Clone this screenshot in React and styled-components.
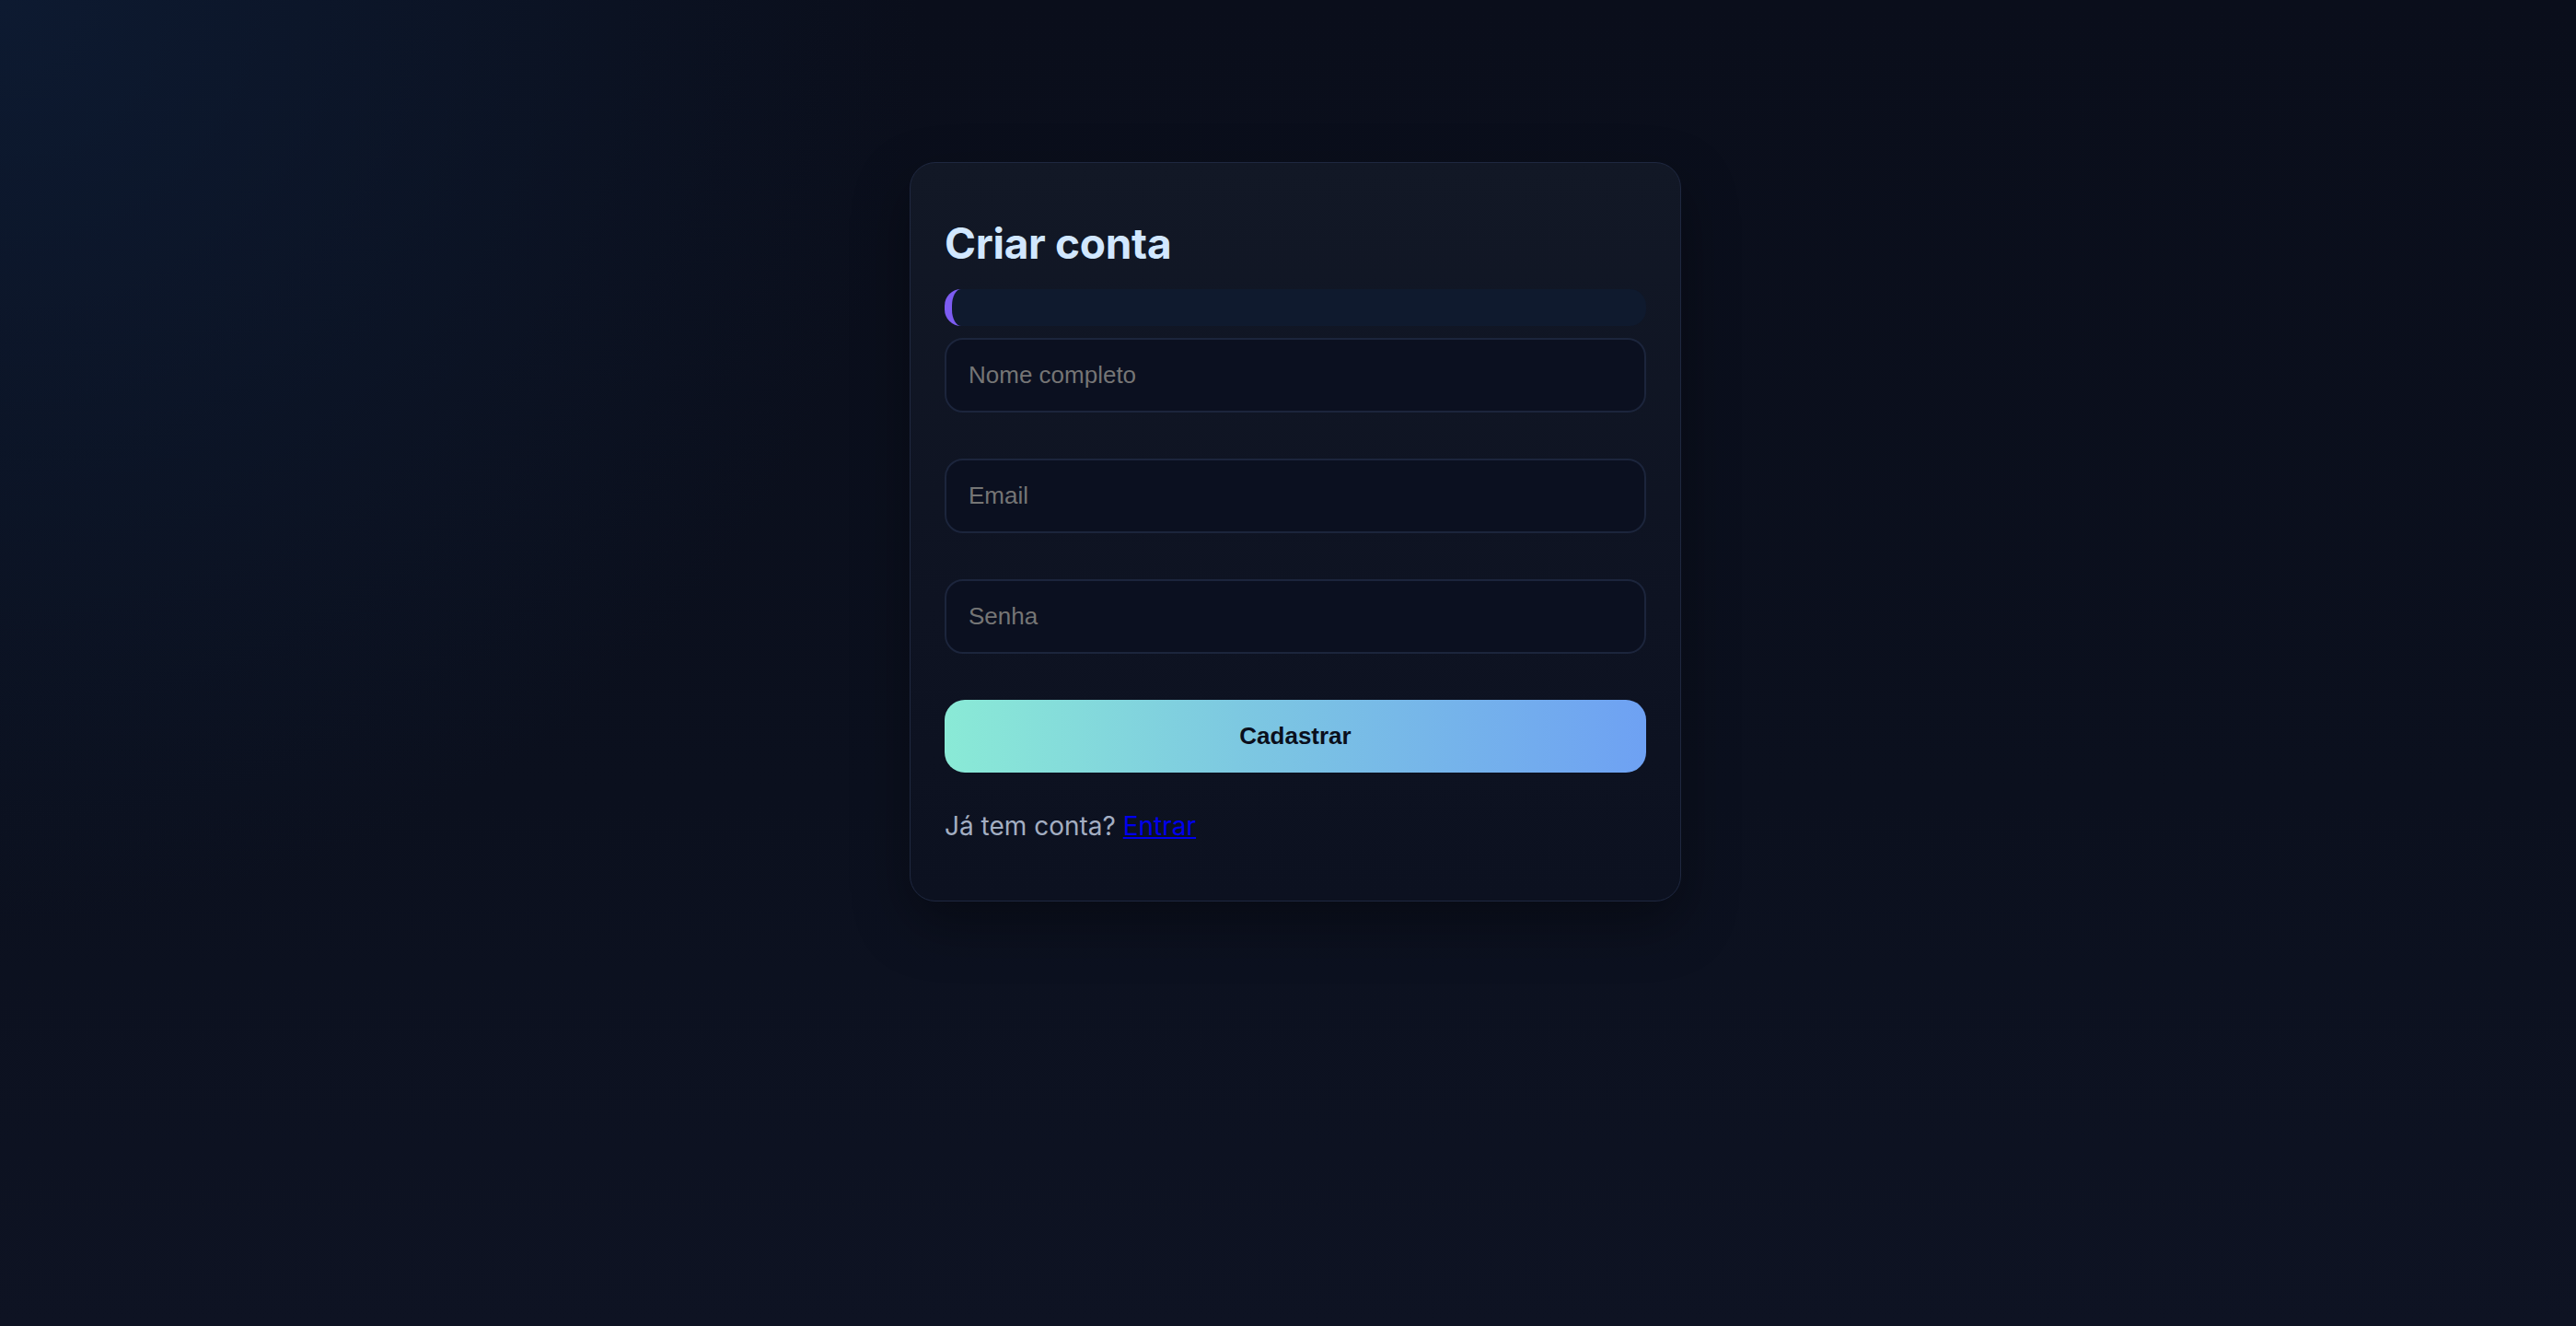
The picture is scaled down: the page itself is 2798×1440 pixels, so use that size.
import React from "react";
import styled, { createGlobalStyle } from "styled-components";

const GlobalStyle = createGlobalStyle`
  html, body {
    margin: 0;
    padding: 0;
  }
  body {
    min-height: 100vh;
    font-family: Inter, "Noto Sans", sans-serif;
    background:
      radial-gradient(circle 1000px at 0% 0%, rgba(14, 30, 56, 0.75) 0%, rgba(11, 16, 32, 0) 100%),
      linear-gradient(180deg, #0a0e1b 0%, #0b101e 60%, #0e1323 100%);
    background-attachment: fixed;
  }
  #root {
    min-height: 100vh;
  }
`;

const Page = styled.div`
  display: flex;
  justify-content: center;
  align-items: flex-start;
  padding: 176px 0 0 16px;
  box-sizing: border-box;
  min-height: 100vh;
`;

const Card = styled.div`
  width: 838px;
  box-sizing: border-box;
  padding: 37px;
  border: 1px solid #1f2840;
  border-radius: 28px;
  background: linear-gradient(180deg, #121826 0%, #0e1322 60%, #0c1120 100%);
  box-shadow: 0 24px 60px rgba(0, 0, 0, 0.35);
`;

const Title = styled.h1`
  margin: 22px 0 22px;
  font-family: Inter, "Noto Sans", sans-serif;
  font-size: 46px;
  font-weight: 700;
  line-height: 56px;
  letter-spacing: -0.3px;
  color: #d1e7ff;
`;

const Progress = styled.div`
  height: 40px;
  box-sizing: border-box;
  margin-bottom: 13px;
  border-radius: 18px;
  border-left: 8px solid #7d5cf2;
  background: #0f1a2e;
`;

const Form = styled.form`
  display: flex;
  flex-direction: column;
  gap: 50px;
`;

const Input = styled.input`
  height: 81px;
  box-sizing: border-box;
  padding: 0 24px;
  border: 2px solid #1c253c;
  border-radius: 20px;
  background: #0b1020;
  color: #e2e8f0;
  font-family: "Liberation Sans", Arial, sans-serif;
  font-size: 26px;
  outline: none;

  &::placeholder {
    color: #757575;
  }
`;

const Button = styled.button`
  height: 79px;
  border: none;
  border-radius: 22px;
  background: linear-gradient(90deg, #8aead6 0%, #7cc6e2 45%, #6ea1f3 100%);
  color: #0a0f1c;
  font-family: "Liberation Sans", Arial, sans-serif;
  font-size: 26px;
  font-weight: 700;
  cursor: pointer;
`;

const Footer = styled.p`
  margin: 41px 0 27px;
  font-family: Inter, "Noto Sans", sans-serif;
  font-size: 28px;
  line-height: 34px;
  color: #a3aec2;
`;

const Link = styled.a`
  color: #0000ee;
  text-decoration: underline;
`;

export default function App() {
  return (
    <>
      <GlobalStyle />
      <Page>
        <Card>
          <Title>Criar conta</Title>
          <Progress />
          <Form onSubmit={(e) => e.preventDefault()}>
            <Input type="text" placeholder="Nome completo" />
            <Input type="email" placeholder="Email" />
            <Input type="password" placeholder="Senha" />
            <Button type="submit">Cadastrar</Button>
          </Form>
          <Footer>
            Já tem conta? <Link href="#">Entrar</Link>
          </Footer>
        </Card>
      </Page>
    </>
  );
}
